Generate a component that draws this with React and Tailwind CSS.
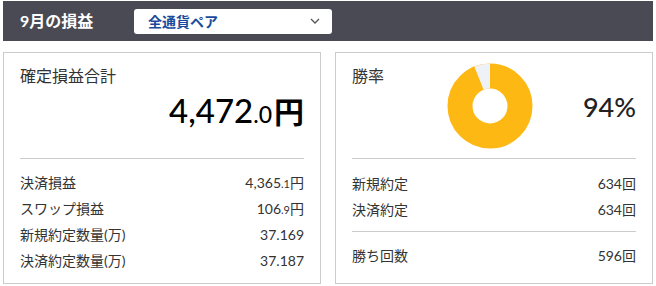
const font = { fontFamily: "Lato, 'Noto Sans CJK JP', sans-serif" };

const leftRows = [
  { label: "決済損益", int: "4,365", dec: ".1", unit: "円" },
  { label: "スワップ損益", int: "106", dec: ".9", unit: "円" },
  { label: "新規約定数量(万)", int: "37.169" },
  { label: "決済約定数量(万)", int: "37.187" },
];

function Row({ label, children }) {
  return (
    <div className="flex h-[26px] items-center justify-between text-[14px] text-[#333]">
      <span>{label}</span>
      <span>{children}</span>
    </div>
  );
}

function Donut() {
  // 94% win rate, grey wedge ends at 12 o'clock
  const r = 30;
  const c = 2 * Math.PI * r;
  const lose = c * 0.06;
  return (
    <svg width="86" height="86" viewBox="0 0 86 86">
      <circle cx="43" cy="43" r={r} fill="none" stroke="#fdb813" strokeWidth="25" />
      <circle
        cx="43"
        cy="43"
        r={r}
        fill="none"
        stroke="#eef1f6"
        strokeWidth="25"
        strokeDasharray={`${lose} ${c}`}
        transform="rotate(-111.6 43 43)"
      />
    </svg>
  );
}

export default function App() {
  return (
    <div className="w-[656px] h-[286px] bg-white px-[3px] pt-[1px]" style={font}>
      {/* header */}
      <div className="flex h-[40px] items-center bg-[#4a4a54] pl-[17px]">
        <span className="w-[114px] text-[16px] font-bold text-white">9月の損益</span>
        <div className="flex h-[25px] w-[198px] items-center justify-between rounded-[3px] bg-white pl-[14px] pr-[12px]">
          <span className="text-[14px] font-bold text-[#1a4b9b]">全通貨ペア</span>
          <svg width="10" height="6" viewBox="0 0 10 6">
            <path d="M1 1 L5 5 L9 1" fill="none" stroke="#555" strokeWidth="1.3" />
          </svg>
        </div>
      </div>

      <div className="mt-[11px] grid grid-cols-2 gap-[14px]">
        {/* left card */}
        <div className="h-[232px] border border-[#cccccc] px-4 pt-[11px]">
          <div className="h-6 text-[16px] leading-6 text-[#333]">確定損益合計</div>
          <div className="mt-[6px] flex items-baseline justify-end leading-none text-black">
            <span className="text-[33px] font-medium">4,472</span>
            <span className="text-[23px] font-medium">.0</span>
            <span className="ml-[2px] text-[30px] font-bold">円</span>
          </div>
          <div className="mt-[31px] h-px bg-[#cccccc]" />
          <div className="mt-[10px]">
            {leftRows.map((r) => (
              <Row key={r.label} label={r.label}>
                {r.int}
                {r.dec && <span className="text-[11px]">{r.dec}</span>}
                {r.unit}
              </Row>
            ))}
          </div>
        </div>

        {/* right card */}
        <div className="h-[232px] border border-[#cccccc] px-4 pt-[10px]">
          <div className="flex">
            <div className="w-[95px] h-6 text-[16px] leading-6 text-[#333] mt-px">勝率</div>
            <Donut />
            <div className="ml-auto self-center text-[27px] font-medium leading-none text-[#222]">94%</div>
          </div>
          <div className="mt-[9px] h-px bg-[#cccccc]" />
          <div className="mt-[11px]">
            <Row label="新規約定">634回</Row>
            <Row label="決済約定">634回</Row>
          </div>
          <div className="mt-[9px] h-px bg-[#cccccc]" />
          <div className="mt-[10px]">
            <Row label="勝ち回数">596回</Row>
          </div>
        </div>
      </div>
    </div>
  );
}
